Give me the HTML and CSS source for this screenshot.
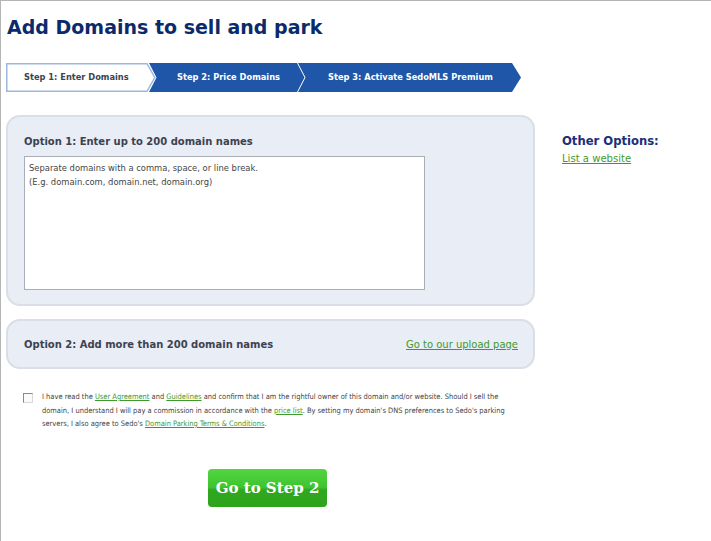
FILE: index.html
```html
<!DOCTYPE html>
<html lang="en">
<head>
<meta charset="utf-8">
<title>Add Domains to sell and park</title>
<link rel="stylesheet" href="styles.css">
</head>
<body>
<div class="page">
  <h1 class="title">Add Domains to sell and park</h1>
  <ol class="steps">
    <li class="step step-one">
      <svg class="step-shape" width="150" height="29" viewBox="0 0 150 29"><path d="M0.75 .75H141L148.8 14.5L141 28.25H.75Z" fill="#fff" stroke="#9db8de" stroke-width="1.5"/></svg>
      <span class="step-label">Step 1: Enter Domains</span>
    </li>
    <li class="step step-two">
      <svg class="step-shape" width="156" height="29" viewBox="0 0 156 29"><path d="M0 0H148L155.5 14.5L148 29H0L7.5 14.5Z" fill="#2056a8"/></svg>
      <span class="step-label">Step 2: Price Domains</span>
    </li>
    <li class="step step-three">
      <svg class="step-shape" width="223" height="29" viewBox="0 0 223 29"><path d="M0 0H214L223 14.5L214 29H0L7.5 14.5Z" fill="#2056a8"/></svg>
      <span class="step-label">Step 3: Activate SedoMLS Premium</span>
    </li>
  </ol>
  <div class="columns">
    <main class="main">
      <section class="panel panel-one">
        <h2 class="panel-title">Option 1: Enter up to 200 domain names</h2>
        <div class="domains">Separate domains with a comma, space, or line break.<br>(E.g. domain.com, domain.net, domain.org)</div>
      </section>
      <section class="panel panel-two">
        <h2 class="panel-title">Option 2: Add more than 200 domain names</h2>
        <a class="link upload-link" href="#">Go to our upload page</a>
      </section>
      <div class="terms">
        <span class="checkbox"></span>
        <p class="terms-text">I have read the <a class="link" href="#">User Agreement</a> and <a class="link" href="#">Guidelines</a> and confirm that I am the rightful owner of this domain and/or website. Should I sell the domain, I understand I will pay a commission in accordance with the <a class="link" href="#">price list</a>. By setting my domain's DNS preferences to Sedo's parking servers, I also agree to Sedo's <a class="link" href="#">Domain Parking Terms &amp; Conditions</a>.</p>
      </div>
      <div class="actions"><a class="next-button" href="#">Go to Step 2</a></div>
    </main>
    <aside class="side">
      <h3 class="side-title">Other Options:</h3>
      <a class="link side-link" href="#">List a website</a>
    </aside>
  </div>
</div>
</body>
</html>
```
FILE: styles.css
```css
html, body { margin: 0; padding: 0; background: #fff; }
body { font-family: "DejaVu Sans", Verdana, sans-serif; font-stretch: condensed; color: #3a3a3a; }
.page {
  box-sizing: border-box;
  width: 711px;
  height: 541px;
  overflow: hidden;
  border-top: 1px solid #b5b5b5;
  border-left: 1px solid #b5b5b5;
  padding: 14px 0 0 5px;
}
.title { margin: 0; padding-left: 1px; font-size: 19px; font-stretch: normal; line-height: 24px; font-weight: 700; color: #0b2a6b; }
.steps { display: flex; list-style: none; margin: 24px 0 0; padding: 0; height: 29px; }
.step { position: relative; height: 29px; font-size: 9.2px; font-weight: 700; line-height: 28px; color: #fff; white-space: nowrap; }
.step-shape { position: absolute; left: 0; top: 0; display: block; }
.step-label { position: relative; }
.step-one { width: 150px; padding-left: 18px; box-sizing: border-box; color: #3c4450; }
.step-two { width: 156px; margin-left: -7px; padding-left: 28px; box-sizing: border-box; }
.step-three { width: 223px; margin-left: -7px; padding-left: 30px; box-sizing: border-box; }
.columns { display: flex; margin-top: 23px; }
.main { width: 529px; }
.panel { box-sizing: border-box; background: #e9edf5; border: 2px solid #dadee5; border-radius: 14px; }
.panel-one { height: 191px; padding: 17px 16px 0; }
.panel-title { margin: 0; font-size: 11.1px; line-height: 16px; font-weight: 700; color: #3d4250; }
.domains {
  box-sizing: border-box;
  width: 401px;
  height: 134px;
  margin-top: 6px;
  padding: 4px 4px;
  background: #fff;
  border: 1px solid #a9adb5;
  font-size: 8.4px;
  font-stretch: normal;
  line-height: 14px;
  color: #444;
}
.panel-two { display: flex; align-items: center; justify-content: space-between; height: 50px; margin-top: 13px; padding: 2px 15px 0 16px; }
.link { color: #3f9a2e; text-decoration: underline; }
.upload-link { margin-bottom: 2px; font-size: 11.1px; }
.terms { display: flex; margin-top: 21px; padding-left: 17px; }
.checkbox {
  flex: none;
  box-sizing: border-box;
  width: 10px;
  height: 10px;
  margin-top: 3px;
  background: #fafafa;
  border: 1px solid #d8d8d8;
  border-top-color: #8a8a8a;
  border-left-color: #8a8a8a;
}
.terms-text { width: 470px; margin: 0 0 0 9px; font-size: 7.45px; line-height: 13.5px; color: #444; }
.actions { display: flex; margin-top: 38px; padding-left: 202px; }
.next-button {
  display: block;
  box-sizing: border-box;
  width: 119px;
  height: 38px;
  border-radius: 4px;
  background: linear-gradient(#52d53f 0%, #3fc432 48%, #2fa81f 55%, #2da31c 100%);
  font-family: "DejaVu Serif", serif;
  font-stretch: normal;
  font-size: 15px;
  font-weight: 700;
  line-height: 39px;
  text-align: center;
  color: #fff;
  text-decoration: none;
}
.side { padding: 18px 0 0 27px; }
.side-title { margin: 0; font-size: 12.9px; line-height: 16px; font-weight: 700; color: #1b2f78; }
.side-link { display: block; margin-top: 3px; font-size: 11.2px; line-height: 14px; }
```
